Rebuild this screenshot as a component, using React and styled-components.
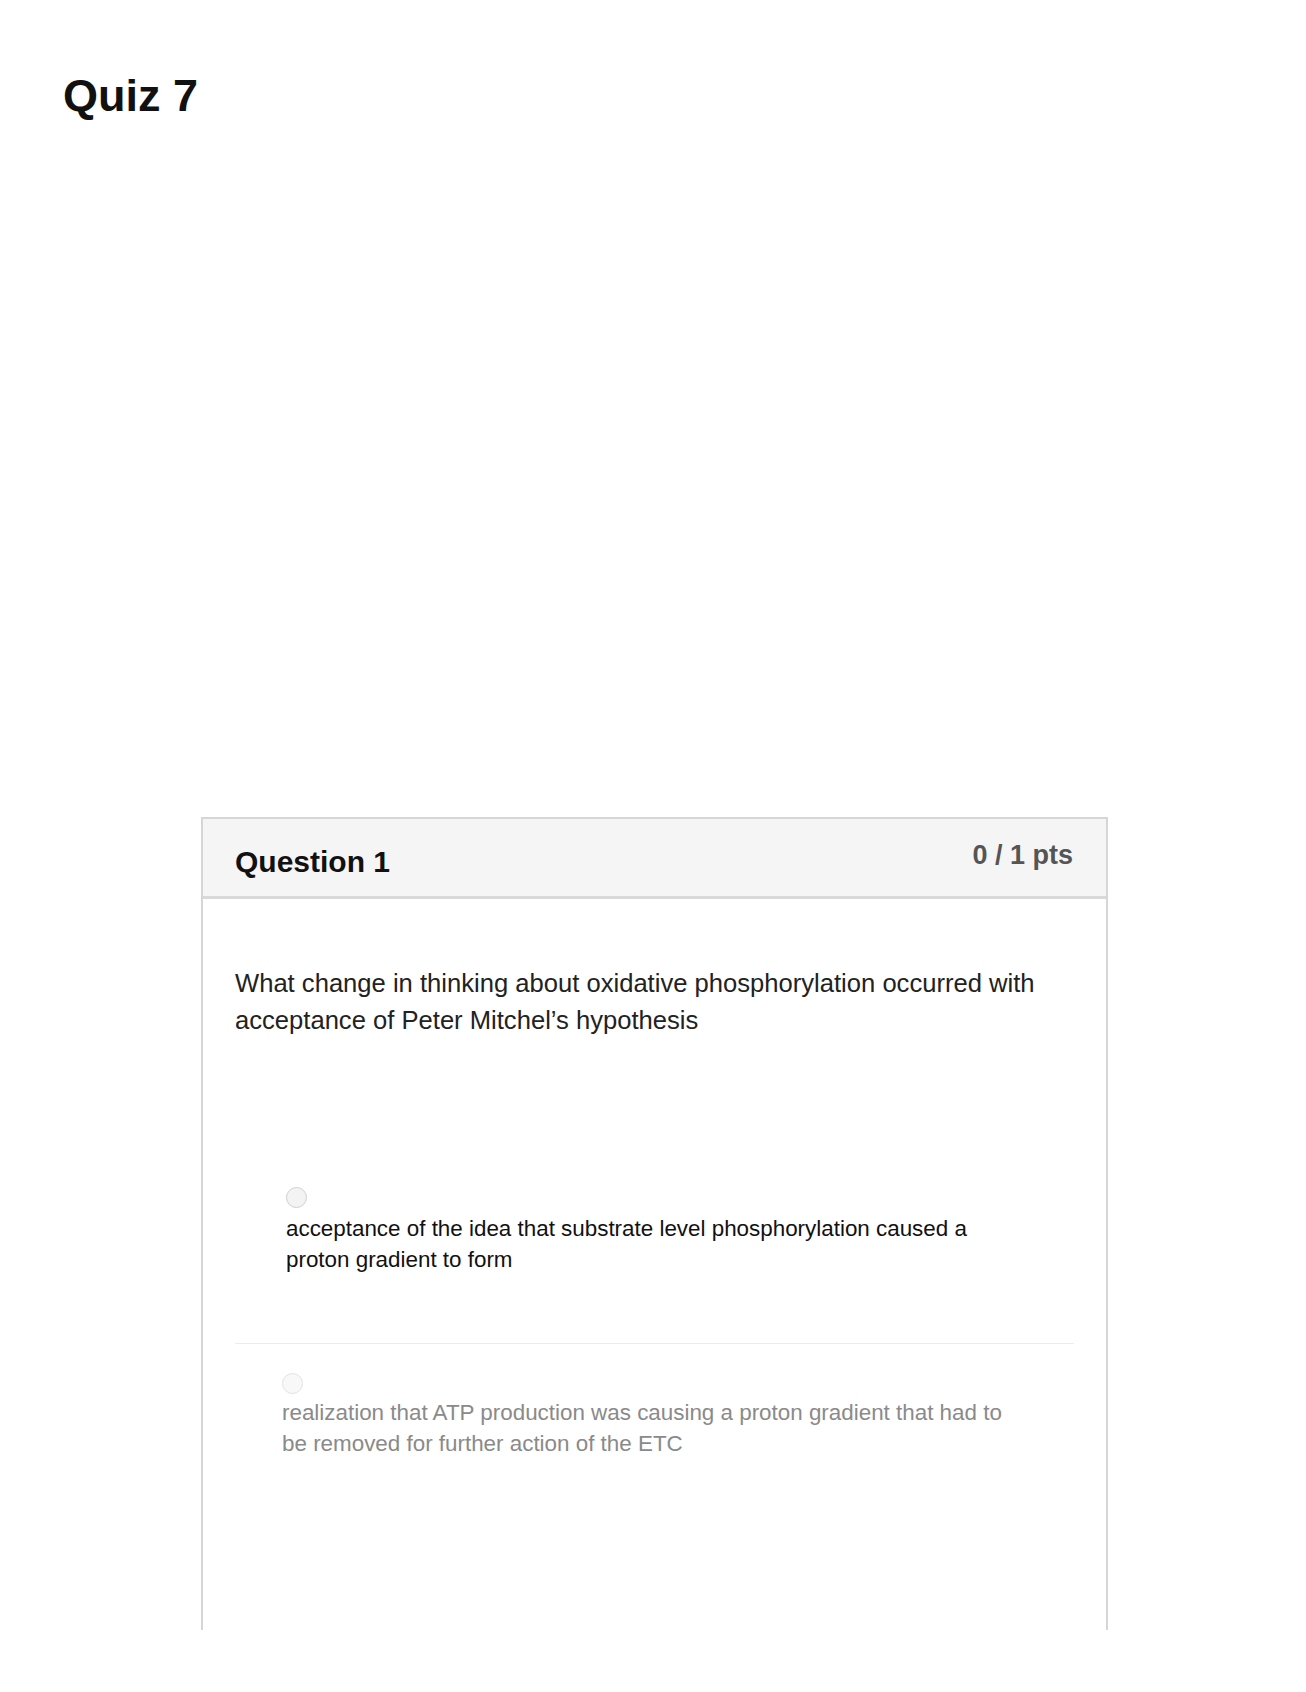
import React from "react";
import styled, { createGlobalStyle } from "styled-components";

const GlobalStyle = createGlobalStyle`
  html, body {
    margin: 0;
    padding: 0;
    background: #ffffff;
    font-family: "Liberation Sans", Arial, sans-serif;
  }
`;

const Page = styled.main`
  width: 1306px;
  height: 1692px;
  box-sizing: border-box;
  padding: 70px 0 0 63px;
  overflow: hidden;
`;

const Title = styled.h1`
  margin: 0;
  font-size: 45px;
  line-height: 52px;
  font-weight: bold;
  color: #111;
`;

const Card = styled.section`
  margin: 695px 0 0 138px;
  width: 907px;
  height: 813px;
  box-sizing: border-box;
  border: 2px solid #d6d6d6;
  border-bottom: none;
  overflow: hidden;
`;

const Header = styled.header`
  display: flex;
  justify-content: space-between;
  align-items: flex-start;
  height: 77px;
  padding: 0 33px 0 32px;
  background: #f5f5f5;
  border-bottom: 3px solid #d9d9d9;
`;

const QuestionName = styled.h2`
  margin: 26px 0 0;
  font-size: 30px;
  line-height: 34px;
  font-weight: bold;
  color: #111;
`;

const Points = styled.div`
  margin-top: 21px;
  font-size: 27px;
  line-height: 31px;
  font-weight: bold;
  color: #555;
`;

const Body = styled.div`
  padding: 66px 32px 0 32px;
`;

const Prompt = styled.p`
  margin: 0;
  font-size: 25.6px;
  line-height: 37px;
  color: #222;
`;

const Answers = styled.div`
  margin-top: 148px;
`;

const Answer = styled.div`
  padding: ${(p) => (p.$first ? "0" : "29px")} 0 68px ${(p) => p.$indent}px;
  border-bottom: ${(p) => (p.$first ? "1px solid #ececec" : "none")};
`;

const Radio = styled.span`
  display: block;
  width: 21px;
  height: 21px;
  box-sizing: border-box;
  border-radius: 50%;
  border: 1px solid ${(p) => (p.$muted ? "#e2e2e2" : "#cfcfcf")};
  background: ${(p) => (p.$muted ? "#f8f8f8" : "#f3f3f3")};
`;

const AnswerText = styled.div`
  margin-top: ${(p) => p.$gap}px;
  max-width: 735px;
  font-size: 22.4px;
  line-height: 31px;
  color: ${(p) => (p.$muted ? "#8a8a8a" : "#111")};
`;

const answers = [
  {
    text: "acceptance of the idea that substrate level phosphorylation caused a proton gradient to form",
    indent: 51,
    gap: 5,
    muted: false,
  },
  {
    text: "realization that ATP production was causing a proton gradient that had to be removed for further action of the ETC",
    indent: 47,
    gap: 3,
    muted: true,
  },
];

export default function App() {
  return (
    <>
      <GlobalStyle />
      <Page>
        <Title>Quiz 7</Title>
        <Card>
          <Header>
            <QuestionName>Question 1</QuestionName>
            <Points>0 / 1 pts</Points>
          </Header>
          <Body>
            <Prompt>
              What change in thinking about oxidative phosphorylation occurred with acceptance of
              Peter Mitchel’s hypothesis
            </Prompt>
            <Answers>
              {answers.map((a, i) => (
                <Answer key={i} $first={i === 0} $indent={a.indent}>
                  <Radio $muted={a.muted} />
                  <AnswerText $gap={a.gap} $muted={a.muted}>
                    {a.text}
                  </AnswerText>
                </Answer>
              ))}
            </Answers>
          </Body>
        </Card>
      </Page>
    </>
  );
}
